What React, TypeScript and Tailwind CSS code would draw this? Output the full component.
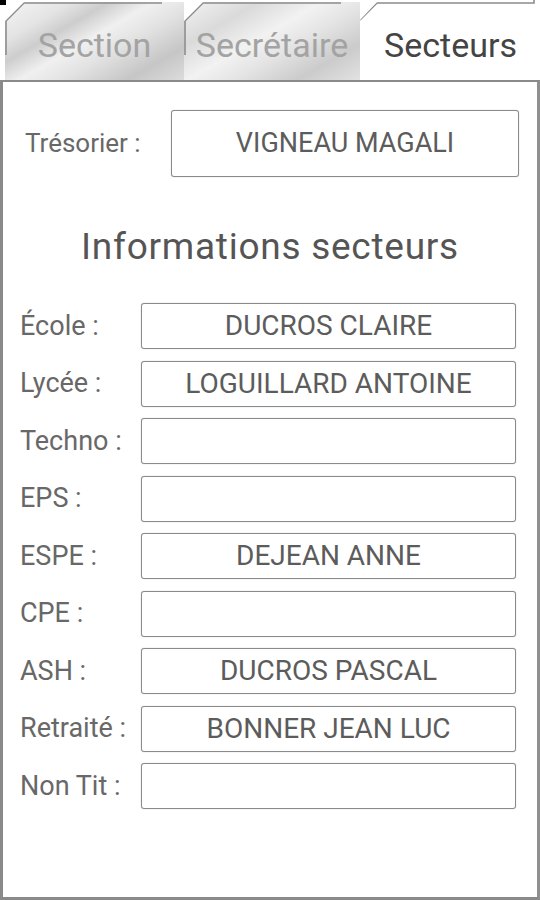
import React from 'react';

type Row = { label: string; value: string };

const rows: Row[] = [
  { label: 'École :', value: 'DUCROS CLAIRE' },
  { label: 'Lycée :', value: 'LOGUILLARD ANTOINE' },
  { label: 'Techno :', value: '' },
  { label: 'EPS :', value: '' },
  { label: 'ESPE :', value: 'DEJEAN ANNE' },
  { label: 'CPE :', value: '' },
  { label: 'ASH :', value: 'DUCROS PASCAL' },
  { label: 'Retraité :', value: 'BONNER JEAN LUC' },
  { label: 'Non Tit :', value: '' },
];

// chamfered tab outline, drawn over the tab background
function TabEdge({ width, lineEnd, left }: { width: number; lineEnd: number; left: boolean }) {
  return (
    <svg className="absolute inset-0 pointer-events-none" width={width} height={80} viewBox={`0 0 ${width} 80`}>
      <path
        d={left ? `M1 55 L1 21 L19 3 L${lineEnd} 3` : `M0 20 L17 3 L${lineEnd} 3 L${lineEnd} 0`}
        fill="none"
        stroke="#8c8c8c"
        strokeWidth={1.6}
      />
    </svg>
  );
}

function Tabs() {
  return (
    <div className="relative flex h-[80px] pl-[5px]">
      <div className="absolute left-0 top-0 h-[5px] w-[6px] bg-black" />
      <div className="relative h-[80px] w-[179px] [clip-path:polygon(0_21px,19px_2px,100%_2px,100%_100%,0_100%)] bg-[linear-gradient(150deg,#f6f6f6_0%,#e4e4e4_22%,#cdcdcd_34%,#f0f0f0_48%,#e2e2e2_62%,#c6c6c6_82%,#dcdcdc_100%)]">
        <TabEdge width={179} lineEnd={157} left />
        <div className="pt-[28px] text-center text-[34px] leading-[34px] text-[#a3a3a3]">Section</div>
      </div>
      <div className="relative h-[80px] w-[176px] [clip-path:polygon(0_21px,19px_2px,100%_2px,100%_100%,0_100%)] bg-[linear-gradient(150deg,#f4f4f4_0%,#dadada_25%,#f2f2f2_45%,#e4e4e4_60%,#cbcbcb_80%,#e2e2e2_100%)]">
        <TabEdge width={176} lineEnd={157} left />
        <div className="whitespace-nowrap pt-[28px] text-center text-[34px] leading-[34px] text-[#a3a3a3]">Secrétaire</div>
      </div>
      <div className="relative h-[80px] w-[175px] bg-white [clip-path:polygon(0_20px,17px_2px,100%_0,100%_100%,0_100%)]">
        <TabEdge width={175} lineEnd={174} left={false} />
        <div className="pt-[28px] pl-[6px] text-center text-[34px] leading-[34px] text-[#444444]">Secteurs</div>
      </div>
    </div>
  );
}

function Field({ value, className }: { value: string; className: string }) {
  return (
    <div
      className={`flex items-center justify-center rounded-[3px] border border-[#8a8a8a] bg-white text-[#5c5c5c] shadow-[0_0_1px_rgba(0,0,0,0.35)] ${className}`}
    >
      {value}
    </div>
  );
}

export default function App() {
  return (
    <div className="h-[900px] w-[540px] overflow-hidden bg-white font-['Roboto',sans-serif]">
      <Tabs />
      <div className="h-[820px] border-x-[3px] border-b-[3px] border-t-2 border-[#8a8a8a] border-r-[#8f8f8f]">
        <div className="mt-[28px] flex items-center">
          <div className="w-[168px] pl-[22px] text-[26px] text-[#686868]">Trésorier :</div>
          <Field value="VIGNEAU MAGALI" className="h-[67px] w-[348px] text-[27px]" />
        </div>

        <div className="mt-[48px] text-center text-[37px] leading-[44px] tracking-[0.02em] text-[#555555]">
          Informations secteurs
        </div>

        <div className="mt-[34px] flex flex-col gap-[11.5px]">
          {rows.map((r) => (
            <div key={r.label} className="flex items-center">
              <div className="w-[138px] whitespace-nowrap pl-[17px] text-[27px] text-[#686868]">{r.label}</div>
              <Field value={r.value} className="h-[46px] w-[375px] text-[28px]" />
            </div>
          ))}
        </div>
      </div>
    </div>
  );
}
